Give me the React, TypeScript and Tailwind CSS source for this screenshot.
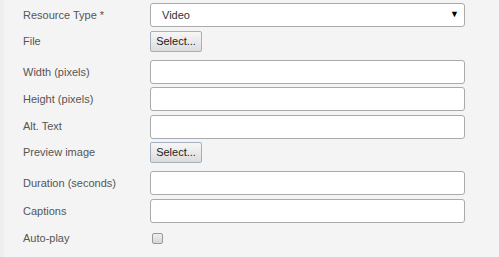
const font = { fontFamily: '"Liberation Sans", Arial, sans-serif' };

function Label({ children }: { children: React.ReactNode }) {
  return <div className="w-[150px] shrink-0 pl-[23px] text-[11px] text-[#555]">{children}</div>;
}

function TextBox() {
  return <div className="h-[24px] w-[315px] rounded-[3px] border border-[#aaa] bg-white" />;
}

function SelectButton() {
  return (
    <button className="h-[21px] w-[52px] rounded-[2px] border border-[#a3b0bd] bg-gradient-to-b from-[#f7f7f7] to-[#dcdcdc] text-[11px] text-[#222]">
      Select...
    </button>
  );
}

export default function App() {
  return (
    <div className="flex h-[257px] w-[499px] bg-[#f4f4f4]" style={font}>
      <div className="w-[4px] shrink-0 bg-[#eeeeee]" />
      <div className="-ml-[4px] flex flex-col">
        {/* Resource type */}
        <div className="mt-[3px] flex h-[24px] items-center">
          <Label>Resource Type *</Label>
          <div className="flex h-[24px] w-[315px] items-center justify-between rounded-[3px] border border-[#aaa] bg-white pl-[11px] pr-[5px] text-[11px] text-[#333]">
            <span>Video</span>
            <span className="text-[9px] text-black">▼</span>
          </div>
        </div>

        <div className="mt-[4px] flex h-[21px] items-center">
          <Label>File</Label>
          <SelectButton />
        </div>

        <div className="mt-[8px] flex h-[24px] items-center">
          <Label>Width (pixels)</Label>
          <TextBox />
        </div>

        <div className="mt-[3px] flex h-[24px] items-center">
          <Label>Height (pixels)</Label>
          <TextBox />
        </div>

        <div className="mt-[4px] flex h-[23px] items-center">
          <Label>Alt. Text</Label>
          <TextBox />
        </div>

        <div className="mt-[4px] flex h-[21px] items-center">
          <Label>Preview image</Label>
          <SelectButton />
        </div>

        <div className="mt-[8px] flex h-[24px] items-center">
          <Label>Duration (seconds)</Label>
          <TextBox />
        </div>

        <div className="mt-[4px] flex h-[24px] items-center">
          <Label>Captions</Label>
          <TextBox />
        </div>

        <div className="mt-[10px] flex h-[11px] items-center">
          <Label>Auto-play</Label>
          <div className="ml-[2px] h-[11px] w-[11px] rounded-[2px] border border-[#999] bg-gradient-to-b from-[#eee] to-[#d6d6d6]" />
        </div>
      </div>
    </div>
  );
}
